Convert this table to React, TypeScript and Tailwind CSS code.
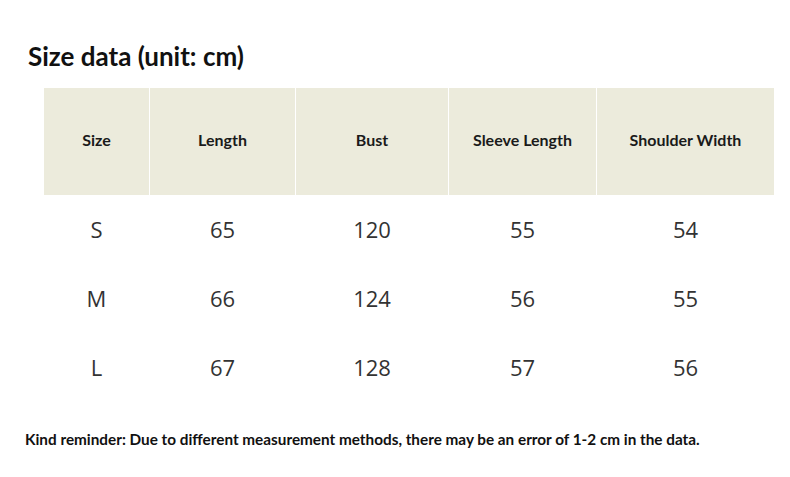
const headers = ["Size", "Length", "Bust", "Sleeve Length", "Shoulder Width"]

const rows = [
  ["S", "65", "120", "55", "54"],
  ["M", "66", "124", "56", "55"],
  ["L", "67", "128", "57", "56"],
]

export default function App() {
  return (
    <div className="w-[790px] h-[477px] bg-white overflow-hidden font-['Lato',sans-serif]">
      <div className="pt-[39px] pl-[28px] h-[88px]">
        <h1 className="text-[26px] leading-[34px] font-bold text-[#111]">Size data (unit: cm)</h1>
      </div>
      <div className="ml-[44px] w-[730px]">
        <div className="grid grid-cols-[105px_145px_152px_147px_177px] gap-x-px">
          {headers.map((h) => (
            <div
              key={h}
              className="h-[107px] pb-[3px] bg-[#ecebdc] flex items-center justify-center text-[16px] font-bold text-[#1a1a1a]"
            >
              {h}
            </div>
          ))}
        </div>
        <div className="grid grid-cols-[105px_145px_152px_147px_177px] gap-x-px">
          {rows.map((r) =>
            r.map((v, i) => (
              <div
                key={r[0] + i}
                className="h-[69px] flex items-center justify-center text-[22px] text-[#333] font-['Open_Sans',sans-serif]"
              >
                {v}
              </div>
            ))
          )}
        </div>
      </div>
      <p className="mt-[26px] pl-[25px] text-[15.3px] font-bold text-[#111]">
        Kind reminder: Due to different measurement methods, there may be an error of 1-2 cm in the data.
      </p>
    </div>
  )
}
